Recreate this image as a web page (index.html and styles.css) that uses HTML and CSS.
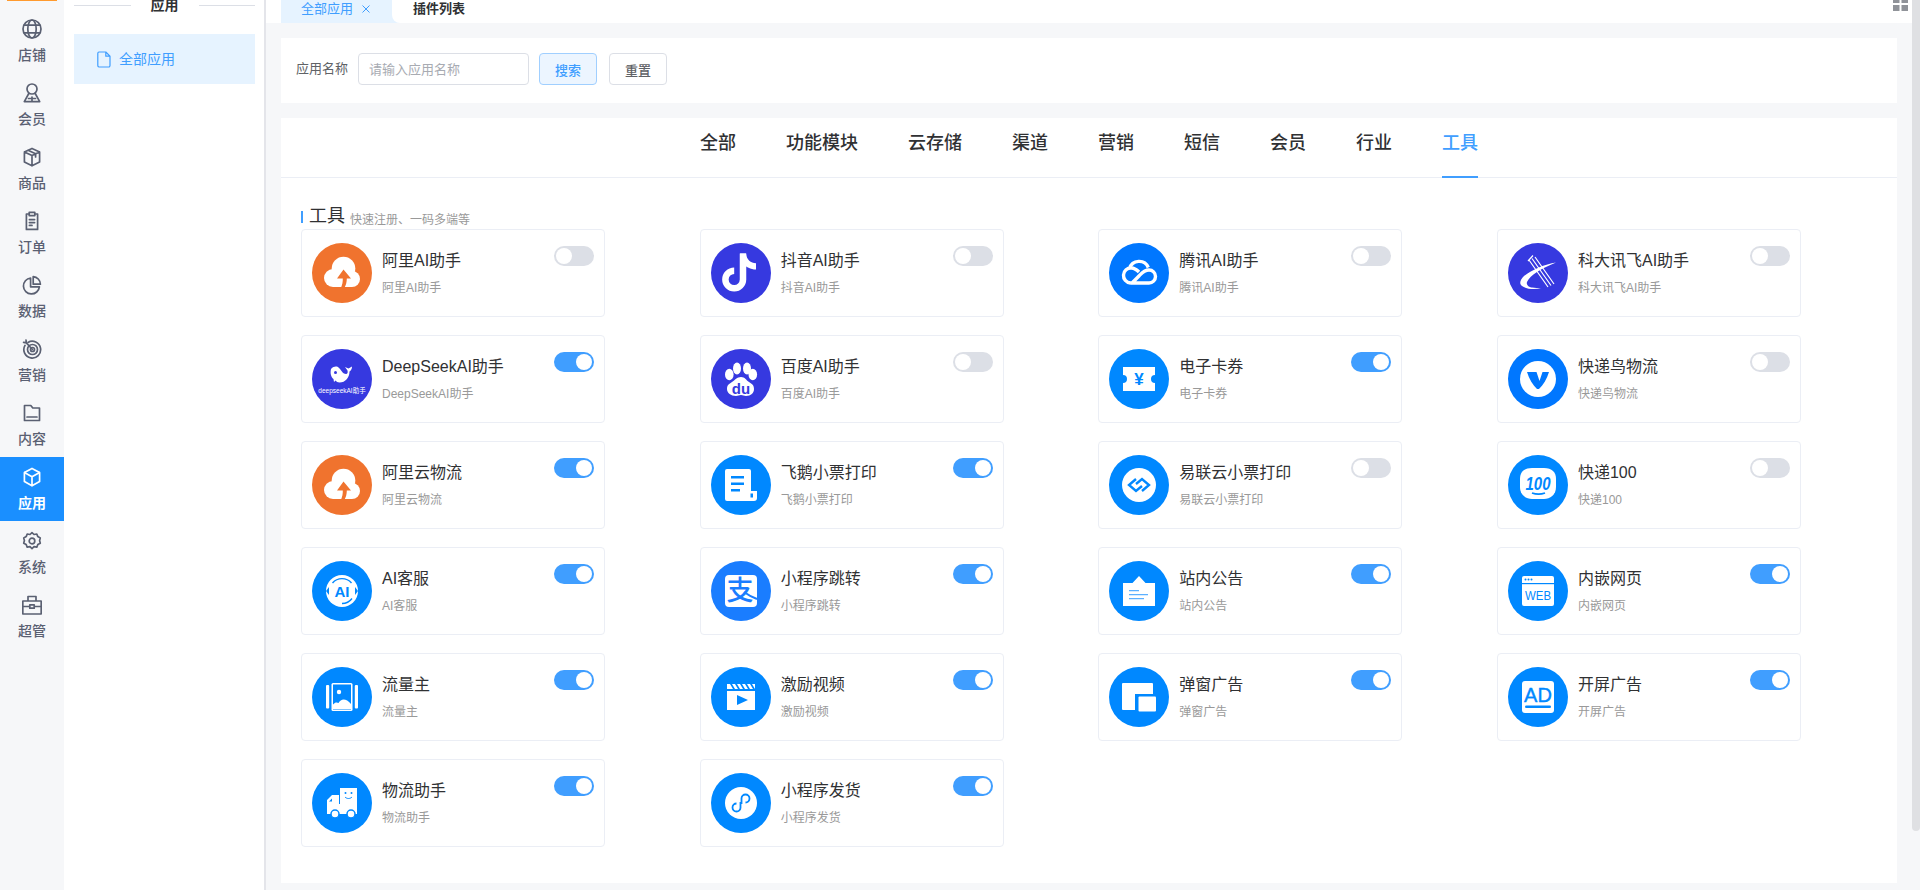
FILE: index.html
```html
<!DOCTYPE html>
<html lang="zh-CN">
<head>
<meta charset="utf-8">
<title>全部应用</title>
<link rel="stylesheet" href="styles.css">
</head>
<body>
<div class="app">
  <nav class="rail">
    <div class="rail-logo"></div>
    <a class="rail-item"><svg class="rail-icon" viewBox="0 0 20 20"><circle cx="10" cy="10" r="9"/><ellipse cx="10" cy="10" rx="4.200" ry="9"/><path d="M2.300 6.200h15.400M2.300 13.800h15.400"/></svg><span>店铺</span></a>
    <a class="rail-item"><svg class="rail-icon" viewBox="0 0 20 20"><circle cx="10" cy="6" r="5"/><path d="M6.800 10.500 2.300 18.600h15.400l-4.500-8.100M10 14v4.500M6.500 15.500h7"/></svg><span>会员</span></a>
    <a class="rail-item"><svg class="rail-icon" viewBox="0 0 20 20"><path d="M10 1.400 17.600 5v10L10 18.800 2.400 15V5zM2.400 5 10 8.600 17.600 5M10 8.600v10.200M6 3.200l7.600 3.600V10"/></svg><span>商品</span></a>
    <a class="rail-item"><svg class="rail-icon" viewBox="0 0 20 20"><path d="M7.200 3H4.400v15.400h11.200V3h-2.800M7.200 1.400h5.600v3.200H7.200zM7.400 8.600h5.200M7.400 11.600h5.200M7.400 14.400h2.600"/></svg><span>订单</span></a>
    <a class="rail-item"><svg class="rail-icon" viewBox="0 0 20 20"><path d="M8.600 3a8 8 0 1 0 8.800 8.800H8.600zM11.200 1.600v7.600h7.200a7.800 7.800 0 0 0-7.200-7.600z"/></svg><span>数据</span></a>
    <a class="rail-item"><svg class="rail-icon" viewBox="0 0 20 20"><path d="M6 3.400a8.400 8.400 0 1 1-3 3"/><circle cx="10.500" cy="10.500" r="5"/><circle cx="10.500" cy="10.500" r="2"/><path d="M10.500 10.500 3.600 3.200M1.600 3.400l2.800.4L4 1"/></svg><span>营销</span></a>
    <a class="rail-item"><svg class="rail-icon" viewBox="0 0 20 20"><path d="M2.500 2.500h6.300l2 2.500h6.700v12.500h-15zM5 14h10"/></svg><span>内容</span></a>
    <a class="rail-item rail-active"><svg class="rail-icon" viewBox="0 0 20 20"><path d="M10 1.400 17.600 5.500v9L10 18.800 2.400 14.500v-9zM2.400 5.500 10 9.800l7.600-4.300M10 9.800v9"/></svg><span>应用</span></a>
    <a class="rail-item"><svg class="rail-icon" viewBox="0 0 20 20"><path d="M10 1.600l2 1.900 2.800-.5 1 2.600 2.500 1.300-.7 2.700.7 2.700-2.500 1.300-1 2.600-2.800-.5-2 1.900-2-1.900-2.800.5-1-2.600-2.500-1.300.7-2.700-.7-2.700 2.500-1.300 1-2.600 2.800.5z"/><circle cx="10" cy="10" r="2.800"/></svg><span>系统</span></a>
    <a class="rail-item"><svg class="rail-icon" viewBox="0 0 20 20"><path d="M.8 6h18.400v13H.8zM6 6V1.500h8V6M.8 11.500h7M12.200 11.500h7M7.800 9.800h4.400v3.400H7.800z"/></svg><span>超管</span></a>
  </nav>

  <aside class="side">
    <div class="side-title"><i></i><b>应用</b><i></i></div>
    <a class="side-item">
      <svg class="side-icon" viewBox="0 0 14 17"><path d="M2 1h6.800L13 5.200v9.400a1.400 1.400 0 0 1-1.400 1.400H2A1.400 1.400 0 0 1 .8 14.600V2.400A1.400 1.400 0 0 1 2 1zM8.800 1v4.200H13"/></svg>
      <span>全部应用</span>
    </a>
  </aside>

  <main class="main">
    <header class="tabbar">
      <div class="tab tab-active"><span>全部应用</span><svg class="tab-close" viewBox="0 0 10 10"><path d="M1.500 1.500l7 7M8.500 1.500l-7 7"/></svg></div>
      <div class="tab tab-plain">插件列表</div>
      <svg class="grid-icon" viewBox="0 0 15 11"><rect x="0" y="-2" width="6.500" height="5"/><rect x="8.500" y="-2" width="6.500" height="5"/><rect x="0" y="5" width="6.500" height="6"/><rect x="8.500" y="5" width="6.500" height="6"/></svg>
    </header>

    <div class="content">
      <section class="search">
        <label class="search-label">应用名称</label>
        <input class="search-input" placeholder="请输入应用名称">
        <button class="btn btn-primary">搜索</button>
        <button class="btn">重置</button>
      </section>

      <section class="panel">
        <div class="cats">
          <a class="cat">全部</a><a class="cat">功能模块</a><a class="cat">云存储</a><a class="cat">渠道</a><a class="cat">营销</a><a class="cat">短信</a><a class="cat">会员</a><a class="cat">行业</a><a class="cat cat-active">工具</a>
        </div>
        <div class="panel-body">
          <div class="head"><i class="head-bar"></i><h2>工具</h2><span>快速注册、一码多端等</span></div>
          <div class="grid">

            <article class="card">
              <svg class="logo" viewBox="0 0 60 60"><circle class="c-orange" cx="30" cy="30" r="30"/><g class="w"><circle cx="21" cy="35" r="9"/><circle cx="31.500" cy="25.500" r="11.800"/><circle cx="40" cy="36" r="8"/><rect x="21" y="30" width="19" height="14"/></g><path class="ao" d="M31.500 26.500 39 35.500h-4.200c0 3.500-.8 6.500-2.200 9h-3.500c1.200-2.800 1.800-5.800 1.700-9H25z"/></svg>
              <div class="info"><h3>阿里AI助手</h3><p>阿里AI助手</p></div>
              <div class="switch"><i></i></div>
            </article>

            <article class="card">
              <svg class="logo" viewBox="0 0 60 60"><circle class="c-indigo" cx="30" cy="30" r="30"/><path class="sw" stroke-width="6.500" d="M32 36.500a8.800 8.800 0 1 1-8.800-8.800M32 37V10.500"/><path class="w" d="M29 10.500h6c.5 6 4.500 9.500 10 9.800v6.200c-5.500 0-10-2.500-13-6z"/></svg>
              <div class="info"><h3>抖音AI助手</h3><p>抖音AI助手</p></div>
              <div class="switch"><i></i></div>
            </article>

            <article class="card">
              <svg class="logo" viewBox="0 0 60 60"><circle class="c-blue2" cx="30" cy="30" r="30"/><path class="sw" stroke-width="3.400" d="M21.500 40H40a6.500 6.500 0 0 0 0-13c-5 0-7 3-10 6l-6.500 6.500M21.500 40a7.500 7.500 0 1 1 1-15c3 0 5.500 2 7.500 4M20.500 25.500a10 10 0 0 1 18.800-1"/></svg>
              <div class="info"><h3>腾讯AI助手</h3><p>腾讯AI助手</p></div>
              <div class="switch"><i></i></div>
            </article>

            <article class="card">
              <svg class="logo" viewBox="0 0 60 60"><circle class="c-indigo" cx="30" cy="30" r="30"/><path class="w" d="M48 19.500C34 25 22 32 19 39c-1 3 2 5 5 5.500 3 .5 6 .5 9 .5-6 2-15 1-19-2-3-2-2-6 2-10C24 27 37 21 48 19.500z"/><path class="sw" stroke-width="1.200" d="M21 17 40 44M24 15.500 43 42.500M27 14 46 41M20 18l5-5.500"/></svg>
              <div class="info"><h3>科大讯飞AI助手</h3><p>科大讯飞AI助手</p></div>
              <div class="switch"><i></i></div>
            </article>

            <article class="card">
              <svg class="logo" viewBox="0 0 60 60"><circle class="c-indigo" cx="30" cy="30" r="30"/><path class="w" d="M19 20c3-3 6-3 8-1 3 3 4 6 7 6 1.500 0 2-1.500 1.500-3.500l-2.500-3.500 3.500 1.500 3.500-2c0 2.500-1 4-2.500 5 0 6-4 11-10 11-2 0-3-1-4-2l-1.500 1.500-.5-3c-2.500-2-3.500-6-2.500-10z"/><circle class="c-indigo" cx="23.500" cy="23.500" r="1.500"/><text class="dseek" x="30" y="44">deepseekAI助手</text></svg>
              <div class="info"><h3>DeepSeekAI助手</h3><p>DeepSeekAI助手</p></div>
              <div class="switch on"><i></i></div>
            </article>

            <article class="card">
              <svg class="logo" viewBox="0 0 60 60"><circle class="c-indigo" cx="30" cy="30" r="30"/><g class="w"><ellipse cx="18.300" cy="25.500" rx="4.300" ry="5.800"/><ellipse cx="26" cy="19.500" rx="4" ry="6"/><ellipse cx="36" cy="19.500" rx="4" ry="6"/><ellipse cx="41.800" cy="25.500" rx="4.300" ry="5.800"/><path d="M30 28c4 0 5 3 8 5 3 2 5 3 5 7 0 4-3 7-8 7-2 0-3-1-5-1s-3 1-5 1c-5 0-9-3-9-7s2-5 5-7 5-5 9-5z"/></g><text class="du" x="30" y="44.500">du</text></svg>
              <div class="info"><h3>百度AI助手</h3><p>百度AI助手</p></div>
              <div class="switch"><i></i></div>
            </article>

            <article class="card">
              <svg class="logo" viewBox="0 0 60 60"><circle class="c-blue" cx="30" cy="30" r="30"/><path class="w" d="M14 18h32v8a4 4 0 0 0 0 8v8H14v-8a4 4 0 0 0 0-8z"/><text class="yen" x="30" y="36">¥</text></svg>
              <div class="info"><h3>电子卡券</h3><p>电子卡券</p></div>
              <div class="switch on"><i></i></div>
            </article>

            <article class="card">
              <svg class="logo" viewBox="0 0 60 60"><circle class="c-blue2" cx="30" cy="30" r="30"/><circle class="w" cx="30" cy="30" r="18"/><path class="ab2" d="M19 23h9.500l3 9 3-9H41c-2 7-6 13-10 17h-2c-4-4-8-10-10-17z"/></svg>
              <div class="info"><h3>快递鸟物流</h3><p>快递鸟物流</p></div>
              <div class="switch"><i></i></div>
            </article>

            <article class="card">
              <svg class="logo" viewBox="0 0 60 60"><circle class="c-orange" cx="30" cy="30" r="30"/><g class="w"><circle cx="21" cy="35" r="9"/><circle cx="31.500" cy="25.500" r="11.800"/><circle cx="40" cy="36" r="8"/><rect x="21" y="30" width="19" height="14"/></g><path class="ao" d="M31.500 26.500 39 35.500h-4.200c0 3.500-.8 6.500-2.200 9h-3.500c1.200-2.800 1.800-5.800 1.700-9H25z"/></svg>
              <div class="info"><h3>阿里云物流</h3><p>阿里云物流</p></div>
              <div class="switch on"><i></i></div>
            </article>

            <article class="card">
              <svg class="logo" viewBox="0 0 60 60"><circle class="c-blue" cx="30" cy="30" r="30"/><path class="w" d="M16 14h22a2 2 0 0 1 2 2v20h6v7a3 3 0 0 1-3 3H16a2 2 0 0 1-2-2V16a2 2 0 0 1 2-2z"/><path class="ab" d="M20 21h13v2.600H20zM20 27.500h13v2.600H20zM20 34h9v2.600h-9zM39.500 38.500h2.500v4h-2.500z"/></svg>
              <div class="info"><h3>飞鹅小票打印</h3><p>飞鹅小票打印</p></div>
              <div class="switch on"><i></i></div>
            </article>

            <article class="card">
              <svg class="logo" viewBox="0 0 60 60"><circle class="c-blue" cx="30" cy="30" r="30"/><circle class="w" cx="30" cy="30" r="17"/><path class="sb" stroke-width="2.400" d="M27 24l-7 6 7 6 6-5M33 36l7-6-7-6-6 5"/></svg>
              <div class="info"><h3>易联云小票打印</h3><p>易联云小票打印</p></div>
              <div class="switch"><i></i></div>
            </article>

            <article class="card">
              <svg class="logo" viewBox="0 0 60 60"><circle class="c-blue" cx="30" cy="30" r="30"/><path class="w" d="M24 13h12c8 0 12 4 12 11v8c0 8-6 12-12 12H24c-6 0-12-4-12-12v-8c0-7 4-11 12-11z"/><text class="k100" x="30" y="35" textLength="25" lengthAdjust="spacingAndGlyphs">100</text><path class="sb" stroke-width="1.800" d="M24 38c4 1.500 9 1.500 13 0"/></svg>
              <div class="info"><h3>快递100</h3><p>快递100</p></div>
              <div class="switch"><i></i></div>
            </article>

            <article class="card">
              <svg class="logo" viewBox="0 0 60 60"><circle class="c-blue" cx="30" cy="30" r="30"/><circle class="w" cx="30" cy="30" r="16"/><path class="sb" stroke-width="1.400" d="M20.500 22a12.500 12.500 0 0 1 19 0M40 37.500a12.500 12.500 0 0 1-10 5"/><path class="ab" d="M14 30l3-4v8zM46 30l-3-4v8z"/><text class="ai" x="30" y="35.500">AI</text></svg>
              <div class="info"><h3>AI客服</h3><p>AI客服</p></div>
              <div class="switch on"><i></i></div>
            </article>

            <article class="card">
              <svg class="logo" viewBox="0 0 60 60"><circle class="c-alipay" cx="30" cy="30" r="30"/><rect class="w" x="14" y="14" width="32" height="32" rx="4"/><text class="zhi" x="29" y="39">支</text><path class="alipay-swoosh" d="M33 31c4 3 8 5 13 7"/></svg>
              <div class="info"><h3>小程序跳转</h3><p>小程序跳转</p></div>
              <div class="switch on"><i></i></div>
            </article>

            <article class="card">
              <svg class="logo" viewBox="0 0 60 60"><circle class="c-blue" cx="30" cy="30" r="30"/><path class="w" d="M30 15l6.500 7H46v23H14V22h9.500z"/><path class="al" d="M20 29h10v1.200H20zM20 33h19v1.200H20zM20 37h15v1.200H20z"/></svg>
              <div class="info"><h3>站内公告</h3><p>站内公告</p></div>
              <div class="switch on"><i></i></div>
            </article>

            <article class="card">
              <svg class="logo" viewBox="0 0 60 60"><circle class="c-blue" cx="30" cy="30" r="30"/><rect class="w" x="14" y="15" width="32" height="30" rx="2"/><path class="ab" d="M14 22h32v1.200H14z"/><circle class="ab" cx="17.500" cy="18.500" r="1"/><circle class="ab" cx="20.500" cy="18.500" r="1"/><circle class="ab" cx="23.500" cy="18.500" r="1"/><text class="web" x="30" y="39" textLength="26" lengthAdjust="spacingAndGlyphs">WEB</text></svg>
              <div class="info"><h3>内嵌网页</h3><p>内嵌网页</p></div>
              <div class="switch on"><i></i></div>
            </article>

            <article class="card">
              <svg class="logo" viewBox="0 0 60 60"><circle class="c-blue" cx="30" cy="30" r="30"/><rect class="w" x="14" y="18" width="3.200" height="23.500" rx="1"/><rect class="w" x="42.800" y="18" width="3.200" height="23.500" rx="1"/><rect class="w" x="19.500" y="16" width="21" height="28" rx="1.500"/><rect class="ab" x="21" y="17.500" width="18" height="25"/><circle class="w" cx="27" cy="25" r="2.200"/><path class="w" d="M21 42v-4.500c2-2.500 4-2.500 5.500-1.500 2.500-4.500 7.500-5 12.500 1v5z"/></svg>
              <div class="info"><h3>流量主</h3><p>流量主</p></div>
              <div class="switch on"><i></i></div>
            </article>

            <article class="card">
              <svg class="logo" viewBox="0 0 60 60"><circle class="c-blue" cx="30" cy="30" r="30"/><path class="w" d="M16 17h28v5H16zM16 24h28v19H16z"/><path class="ab" d="M19 17h2l3 5h-2zM24 17h2l3 5h-2zM29 17h2l3 5h-2zM34 17h2l3 5h-2zM39 17h2l3 5h-2zM26 28l11 5-11 5z"/></svg>
              <div class="info"><h3>激励视频</h3><p>激励视频</p></div>
              <div class="switch on"><i></i></div>
            </article>

            <article class="card">
              <svg class="logo" viewBox="0 0 60 60"><circle class="c-blue" cx="30" cy="30" r="30"/><rect class="w" x="13" y="16" width="31" height="27" rx="1"/><rect class="ab" x="26" y="27" width="21" height="18"/><rect class="w" x="29.500" y="29.500" width="17.500" height="15" rx="1"/></svg>
              <div class="info"><h3>弹窗广告</h3><p>弹窗广告</p></div>
              <div class="switch on"><i></i></div>
            </article>

            <article class="card">
              <svg class="logo" viewBox="0 0 60 60"><circle class="c-blue" cx="30" cy="30" r="30"/><rect class="w" x="14" y="14" width="32" height="32" rx="3"/><text class="ad" x="30" y="35">AD</text><rect class="ab" x="17" y="38.500" width="26" height="2.600" rx="1.300"/></svg>
              <div class="info"><h3>开屏广告</h3><p>开屏广告</p></div>
              <div class="switch on"><i></i></div>
            </article>

            <article class="card">
              <svg class="logo" viewBox="0 0 60 60"><circle class="c-blue" cx="30" cy="30" r="30"/><path class="w" d="M28 15h17v16H28zM20 22h7v9h18v8H15V27zM15 39h30v2H15z"/><path class="ab" d="M17 28.500h3v-3z"/><circle class="ab" cx="33.500" cy="20" r="1"/><circle class="ab" cx="39.500" cy="20" r="1"/><path class="sb" stroke-width="1" d="M33 24c2 2 5 2 7 0"/><circle class="wb" cx="23" cy="41" r="4"/><circle class="wb" cx="39" cy="41" r="4"/></svg>
              <div class="info"><h3>物流助手</h3><p>物流助手</p></div>
              <div class="switch on"><i></i></div>
            </article>

            <article class="card">
              <svg class="logo" viewBox="0 0 60 60"><circle class="c-blue" cx="30" cy="30" r="30"/><circle class="w" cx="30" cy="30" r="16"/><path class="sb" stroke-width="1.800" d="M29.500 29v5.500a4 4 0 1 1-4-4M30.500 31v-5.500a4 4 0 1 1 4 4"/></svg>
              <div class="info"><h3>小程序发货</h3><p>小程序发货</p></div>
              <div class="switch on"><i></i></div>
            </article>

          </div>
        </div>
      </section>
    </div>
  </main>
  <div class="scroll-thumb"></div>
</div>
</body>
</html>
```

FILE: styles.css
```css
* { box-sizing: border-box; margin: 0; padding: 0; }
html, body { height: 100%; overflow: hidden; }
body { font-family: "Liberation Sans", "Noto Sans CJK SC", sans-serif; color: #303133; background: #fff; }
.app { display: flex; height: 890px; position: relative; }

/* left rail */
.rail { width: 64px; flex: none; background: #f6f7f9; }
.rail-logo { width: 50px; height: 1px; margin: 0 0 8px 7px; background: #ff9a2e; }
.rail-item { display: flex; flex-direction: column; align-items: center; height: 64px; padding-top: 10px; color: #5a6072; font-size: 14px; }
.rail-item span { display: block; line-height: 20px; margin-top: 6px; font-weight: 500; }
.rail-icon { width: 20px; height: 20px; flex: none; fill: none; stroke: currentColor; stroke-width: 1.700; stroke-linejoin: round; stroke-linecap: round; }
.rail-active { background: #1a8fff; color: #fff; }
.rail-active span { font-weight: 700; }

/* second column */
.side { width: 202px; flex: none; padding: 0 9px 0 10px; border-right: 2px solid #e4e5ea; background: #fff; }
.side-title { display: flex; align-items: center; gap: 20px; height: 11px; font-size: 14px; line-height: 11px; margin-bottom: 23px; }
.side-title i { flex: 1; height: 1px; background: #dcdfe6; }
.side-title b { font-weight: 700; }
.side-item { display: flex; align-items: center; height: 50px; padding-left: 23px; background: #e6f3ff; color: #409eff; font-size: 14px; }
.side-item span { padding-bottom: 2px; }
.side-icon { width: 14px; height: 17px; margin-right: 8px; fill: none; stroke: #409eff; stroke-width: 1.200; stroke-linejoin: round; }

/* main */
.main { flex: 1; min-width: 0; background: #f6f7f9; }
.tabbar { display: flex; height: 23px; padding-left: 15px; background: #fff; font-size: 13px; line-height: 18px; overflow: hidden; }
.tab-active { position: relative; display: flex; align-items: flex-start; width: 119px; padding-left: 20px; background: #e6f3ff; color: #409eff; }
.tab-active::after { content: ""; position: absolute; top: 0; right: 0; width: 8px; height: 23px; background: #fff; border-bottom-left-radius: 10px; }
.tab-close { width: 10px; height: 10px; margin: 4px 0 0 8px; fill: none; stroke: #409eff; stroke-width: 1; }
.tab-plain { margin-left: 13px; font-weight: 700; color: #303133; }
.grid-icon { width: 15px; height: 11px; margin: 0 12px 0 auto; fill: #909399; }

.content { padding: 15px 23px 0 15px; }
.search { display: flex; align-items: flex-start; height: 65px; padding: 15px 0 0 15px; background: #fff; font-size: 13px; }
.search-label { width: 52px; margin-right: 10px; line-height: 32px; color: #606266; }
.search-input { width: 171px; height: 32px; padding: 0 10px; border: 1px solid #dcdfe6; border-radius: 4px; font: inherit; outline: none; }
.search-input::placeholder { color: #a8abb2; opacity: 1; }
.btn { width: 58px; height: 32px; margin-left: 12px; border: 1px solid #dcdfe6; border-radius: 4px; background: #fff; color: #606266; font: inherit; font-weight: 500; }
.btn-primary { margin-left: 10px; border-color: #a0cfff; background: #ecf5ff; color: #409eff; }

.panel { margin-top: 15px; height: 765px; background: #fff; }
.cats { display: flex; justify-content: center; gap: 50px; height: 60px; border-bottom: 1px solid #ebeef5; }
.cat { height: 60px; line-height: 50px; font-size: 18px; font-weight: 500; color: #303133; }
.cat-active { color: #409eff; border-bottom: 2px solid #409eff; }

.panel-body { padding: 26px 0 0 20px; }
.head { display: flex; align-items: center; height: 25px; }
.head-bar { width: 2px; height: 12px; margin-right: 6px; background: #409eff; }
.head h2 { font-size: 18px; font-weight: 400; color: #303133; line-height: 25px; }
.head span { margin: 3px 0 0 5px; font-size: 12px; color: #999; }

.grid { display: grid; grid-template-columns: repeat(4, 304px); column-gap: 94.67px; row-gap: 18px; }
.card { display: flex; height: 88px; padding: 13px 10px; border: 1px solid #ebeef5; border-radius: 4px; background: #fff; }
.logo { width: 60px; height: 60px; flex: none; margin-right: 10px; }
.info { flex: 1; min-width: 0; padding-top: 6px; }
.info h3 { font-size: 16px; font-weight: 400; line-height: 24px; color: #303133; }
.info p { margin-top: 6px; font-size: 12px; line-height: 18px; color: #999; }

.switch { display: flex; flex: none; width: 40px; height: 20px; margin-top: 3px; padding: 2px; border-radius: 10px; background: #dcdfe6; }
.switch i { width: 16px; height: 16px; border-radius: 50%; background: #fff; }
.switch.on { justify-content: flex-end; background: #409eff; }

/* logo paints */
.c-orange { fill: #f0732e; }
.c-indigo { fill: #3639e0; }
.c-blue { fill: #0088ff; }
.c-blue2 { fill: #0077ff; }
.c-alipay { fill: #1a7dff; }
.w { fill: #fff; }
.ao { fill: #f0732e; }
.ab { fill: #0088ff; }
.ab2 { fill: #0077ff; }
.al { fill: #5cb0ff; }
.sw { fill: none; stroke: #fff; }
.sb { fill: none; stroke: #0088ff; }
.wb { fill: #fff; stroke: #0088ff; stroke-width: 1.500; }
.alipay-swoosh { fill: none; stroke: #1a7dff; stroke-width: 2; }
.dseek { fill: #fff; font-size: 6.500px; text-anchor: middle; }
.du { fill: #3639e0; font-size: 15px; font-weight: 700; text-anchor: middle; }
.yen { fill: #0088ff; font-size: 17px; font-weight: 700; text-anchor: middle; }
.k100 { fill: #0088ff; font-size: 19px; font-weight: 700; font-style: italic; text-anchor: middle; }
.ai { fill: #0088ff; font-size: 15px; font-weight: 700; text-anchor: middle; }
.zhi { fill: #1a7dff; font-size: 27px; font-weight: 500; text-anchor: middle; }
.web { fill: #0088ff; font-size: 12.500px; text-anchor: middle; }
.ad { fill: #0088ff; stroke: #0088ff; stroke-width: .4px; font-size: 20px; text-anchor: middle; }

.scroll-thumb { position: absolute; top: 0; right: 0; width: 8px; height: 831px; border-radius: 0 0 4px 4px; background: #dfe0e3; }
```
